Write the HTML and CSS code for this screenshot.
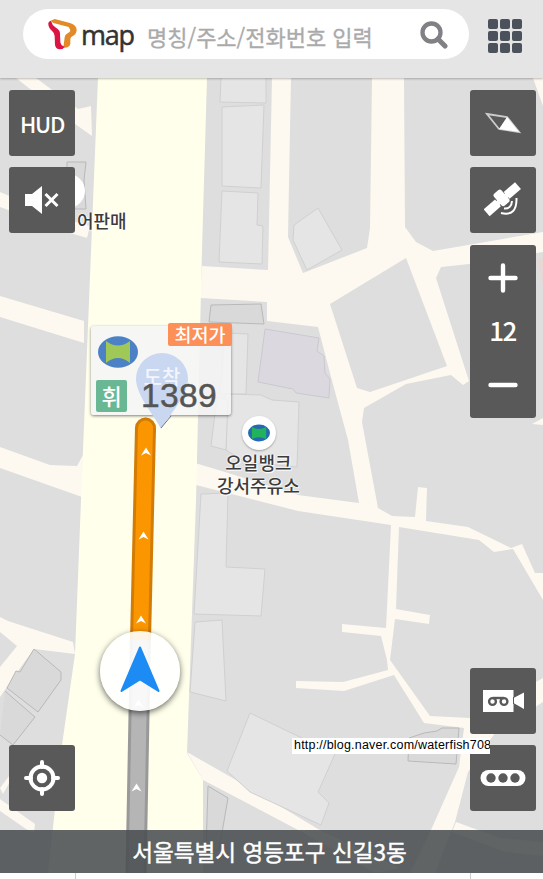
FILE: index.html
```
<!DOCTYPE html>
<html lang="ko">
<head>
    <meta charset="UTF-8">
    <meta name="viewport" content="width=device-width, initial-scale=1.0">
    <title>T map</title>
    <link rel="stylesheet" href="styles.css">
</head>
<body>
    <header class="header">
        <div class="search">
            <svg class="logo" width="30" height="36" viewBox="0 0 30 36">
                <g transform="translate(-4 -3) scale(0.3333)">
                    <path d="M20 20 L32 15 L78 27 Q98 33 98 49 Q97 62 85 67 Q79 70 79 76 V90 Q75 103 58 101 L62 70 Q62 62 71 58 Q80 54 79 48 L74 39 L28 27Z" fill="#e28a28"/>
                    <path d="M13 28 Q13 22 21 20 Q24 33 34 40 L42 46 Q48 50 48 58 L49 84 Q51 96 62 98 Q58 106 48 106 Q34 104 33 92 L32 66 Q32 58 25 52 Q12 40 13 28Z" fill="#dc1444"/>
                </g>
            </svg>
            <span class="logo-text">map</span>
            <span class="placeholder">명칭/주소/전화번호 입력</span>
            <svg class="search-icon" width="28" height="28" viewBox="0 0 28 28">
                <circle cx="11.500" cy="11.500" r="9" fill="none" stroke="#808085" stroke-width="4.300"/>
                <path d="M18 18 L25 25" stroke="#808085" stroke-width="5" stroke-linecap="round"/>
            </svg>
        </div>
        <div class="menu">
            <i></i><i></i><i></i>
            <i></i><i></i><i></i>
            <i></i><i></i><i></i>
        </div>
    </header>

    <main class="map">
        <svg class="map-canvas" width="543" height="795" viewBox="0 78 543 795">
            <rect y="78" width="543" height="795" fill="#dedede"/>

            <!-- small roads -->
            <g fill="#fdf8f0">
                <path d="M16 78 H36 L78 109 L91 106 L92 136 L75 124Z"/>
                <path d="M0 192 L12 197 L76 222 L90 226 L87 238 L70 233 L0 207Z"/>
                <path d="M0 296 L84 321 V343 L0 317Z"/>
                <path d="M0 447 L50 465 L77 466 L83 455 L82 497 L0 468Z"/>
                <path d="M0 617 L8 621 L73 642 L75 654 L34 649 L18 671 L0 697 V667 L17 646 L0 632Z"/>
                <path d="M0 788 L9 776 L11 780 L3 794Z"/>
                <path d="M0 799 L35 824 L34 833 L26 829 L0 811Z"/>
                <path d="M187 752 L250 788 L318 829 L400 868 L375 873 L300 831 L203 780Z"/>
                <path d="M456 822 L500 838 L543 842 V856 L505 852 L452 832Z"/>
                <path d="M533 78 H543 V106Z"/>
                <path d="M532 424 L543 418 V425Z"/>
                <path d="M202 266 L268 270 L272 78 H291 L288 237 L303 273 L367 248 L370 228 L372 78 H404 L405 227 L416 242 L433 251 L543 232 V252 L469 264 L441 267 L436 278 L469 381 L463 385 L451 375 L406 384 L364 408 L362 422 L378 508 L392 516 L415 517 L418 487 L427 488 L426 521 L468 527 L511 548 L522 544 L535 573 H543 V600 L513 549 L494 552 L479 540 L399 527 L396 609 L430 615 L429 624 L395 619 L390 660 L430 716 L470 718 L495 705 L543 678 V702 L495 733 L468 772 L455 822 L435 873 H410 L431 830 L459 767 L464 728 L424 723 L394 675 L344 691 L296 688 V681 L343 682 L388 670 L387 660 L381 636 L342 632 V624 L386 628 L391 525 L298 511 L196 485 L195 463 L225 472 L298 495 L359 503 L348 440 L331 377 L318 327 L267 321 V302 L200 298Z"/>
            </g>
            <path d="M330 304 L406 258 L447 366 L370 392 L357 388Z" fill="#dedede"/>

            <!-- main road -->
            <path d="M98 78 H207 L202 250 L196 500 L187 753 L203 780 V873 H48 L62 745 L75 654 L81 500Z" fill="#ffffec"/>

            <!-- buildings -->
            <g fill="#e5e5e5" stroke="#d0d0d0">
                <path d="M221 77 H266 V103 L220 102Z"/>
                <path d="M222 107 L264 105 L261 188 L222 186Z"/>
                <path d="M222 191 L258 193 L257 225 L263 226 L262 264 L219 262Z"/>
                <path d="M318 208 L342 250 L307 270 L293 240 L294 225Z"/>
                <path d="M225 333 L248 334 L246 394 H220Z"/>
                <path d="M225 394 L261 395 L272 400 L299 402 L297 467 L245 462 L226 450Z"/>
                <path d="M217 397 L228 400 L226 450 L211 446Z"/>
                <path d="M201 494 L228 493 L226 567 L265 569 L261 616 L194 614Z"/>
                <path d="M195 622 L222 620 L226 701 L190 692Z"/>
                <path d="M250 713 L335 754 L318 792 L329 803 L321 825 L250 792 L227 771Z"/>
            </g>
            <g fill="#d9d9d9" stroke="#b9b9b9">
                <path d="M67 162 H86 L84 180 L86 209 H66Z"/>
                <path d="M34 649 L61 672 V680 L38 712 L7 688 L16 671 L20 672Z"/>
                <path d="M5 691 L35 717 L13 745 L0 735"/>
                <path d="M211 305 L261 304 L264 324 L209 322Z"/>
                <path d="M208 786 L228 798 L219 850 L206 850Z"/>
                <path d="M424 733 L437 731 L442 728 H459 L456 764 L408 761 L409 738Z"/>
            </g>
            <path d="M265 329 L319 338 L317 351 L324 356 L325 373 L330 379 L329 398 L296 393 L293 389 L258 382Z" fill="#dbd9df" stroke="#cbc8d0"/>
            <path d="M537 260 L543 257 V287Z" fill="#e8d8d5"/>

            <!-- route -->
            <g fill="none">
                <path d="M140.500 636 L136 873" stroke="#999" stroke-width="21"/>
                <path d="M140.500 636 L136 873" stroke="#b5b5b5" stroke-width="15"/>
                <path d="M145.500 428 L140.500 640" stroke="#d27b05" stroke-width="21"/>
                <path d="M145.500 428 L145.400 430" stroke="#d27b05" stroke-width="21" stroke-linecap="round"/>
                <path d="M145.500 428 L145.400 430" stroke="#fb9600" stroke-width="15" stroke-linecap="round"/>
                <path d="M145.500 428 L140.500 640" stroke="#fb9600" stroke-width="15"/>
            </g>
            <g fill="#fff">
                <path id="chevron" d="M146 447.500 L151 455.500 L146 453 L141 455.500Z"/>
                <use href="#chevron" x="-2.500" y="84"/>
                <use href="#chevron" x="-5" y="168"/>
                <use href="#chevron" x="-7.500" y="252"/>
                <use href="#chevron" x="-9.500" y="336"/>
            </g>
        </svg>

        <span class="poi poi-shop"></span>
        <div class="poi-label label-shop">어판매</div>

        <div class="poi poi-oil">
            <svg width="22" height="18" viewBox="0 0 40 32">
                <ellipse cx="20" cy="16" rx="20" ry="15.500" fill="#2569b0"/>
                <path d="M7 5 Q20 12 33 5 V27 Q20 20 7 27Z" fill="#20b35a"/>
            </svg>
        </div>
        <div class="poi-label label-oil">오일뱅크<br>강서주유소</div>

        <div class="price-card">
            <svg class="pin" width="54" height="78" viewBox="0 0 54 78">
                <path d="M26 77 C22 67 1 44 1 27 A26 26 0 0 1 53 27 C53 44 31 67 26 77Z" fill="#cad7f1"/>
                <path d="M26 76 L36 64" stroke="#69748c" stroke-width="1"/>
                <text class="pin-text" x="27" y="33" text-anchor="middle">도착</text>
            </svg>
            <span class="best">최저가</span>
            <svg class="brand" width="40" height="32" viewBox="0 0 40 32">
                <ellipse cx="20" cy="16" rx="20" ry="15.700" fill="#4c82c5"/>
                <path d="M8 5 Q20 14 32 5 V27 Q20 17 8 27Z" fill="#a0c857"/>
            </svg>
            <div class="price-row">
                <span class="fuel">휘</span>
                <span class="price">1389</span>
            </div>
        </div>

        <div class="me">
            <svg width="40" height="46" viewBox="0 0 40 46">
                <path d="M20 1.500 L38.500 45 L20 33.500 L1.500 45Z" fill="#1c8cf4" stroke="#1c8cf4" stroke-width="2" stroke-linejoin="round"/>
            </svg>
        </div>

        <div class="controls">
            <div class="column">
                <div class="btn"><span class="hud">HUD</span></div>
                <div class="btn">
                    <svg width="36" height="30" viewBox="0 0 36 30">
                        <path d="M1 9 H8 L18 1 V29 L8 21 H1Z" fill="#fff"/>
                        <path d="M21.500 9 L33.500 21 M33.500 9 L21.500 21" stroke="#fff" stroke-width="3"/>
                    </svg>
                </div>
                <div class="btn bottom">
                    <svg width="38" height="38" viewBox="0 0 38 38">
                        <circle cx="19" cy="19" r="11.500" fill="none" stroke="#fff" stroke-width="4"/>
                        <circle cx="19" cy="19" r="5.200" fill="#fff"/>
                        <path d="M19 3 V8 M19 30 V35 M3 19 H8 M30 19 H35" stroke="#fff" stroke-width="4" stroke-linecap="round"/>
                    </svg>
                </div>
            </div>
            <div class="column">
                <div class="btn">
                    <svg width="36" height="24" viewBox="0 0 36 24">
                        <path d="M2 3 L22 6 L34 21 L14 18Z" fill="none" stroke="#ccc" stroke-width="1.800"/>
                        <path d="M22 6 L34 21 L14 18Z" fill="#fff"/>
                    </svg>
                </div>
                <div class="btn">
                    <svg width="38" height="36" viewBox="0 0 38 36">
                        <g transform="translate(18.500 17) rotate(-41)" fill="#fff">
                            <rect x="-21" y="-4.500" width="15" height="9"/>
                            <rect x="5.500" y="-4.500" width="15" height="9"/>
                            <rect x="-8" y="-2.500" width="16" height="5"/>
                            <rect x="-5" y="-9.500" width="10" height="16" rx="2.500"/>
                        </g>
                        <path d="M20 26.500 Q27.500 27 28 19 M17 31 Q33 35 32.500 16" fill="none" stroke="#fff" stroke-width="2"/>
                    </svg>
                </div>
                <div class="zoom">
                    <svg width="30" height="30" viewBox="0 0 30 30">
                        <path d="M15 2.500 V27.500 M2.500 15 H27.500" stroke="#fff" stroke-width="4.400" stroke-linecap="round"/>
                    </svg>
                    <span class="level">12</span>
                    <svg width="30" height="30" viewBox="0 0 30 30">
                        <path d="M2.500 15 H27.500" stroke="#fff" stroke-width="4.400" stroke-linecap="round"/>
                    </svg>
                </div>
                <div class="btn bottom">
                    <svg width="42" height="24" viewBox="0 0 42 24">
                        <path d="M1 1 H31.500 V9 L42 3.500 V20 L31.500 14 V23 H1Z" fill="#fff"/>
                        <path d="M31.500 8 V15" stroke="#595959"/>
                        <g fill="none" stroke="#595959" stroke-width="2.400">
                            <circle cx="10.500" cy="12.500" r="3.400"/>
                            <circle cx="22" cy="12.500" r="3.400"/>
                            <path d="M10.500 9 H22"/>
                        </g>
                    </svg>
                </div>
                <div class="btn">
                    <svg width="46" height="18" viewBox="0 0 46 18">
                        <rect x="0.500" y="1" width="45" height="16" rx="8" fill="#fff"/>
                        <g fill="#595959">
                            <circle cx="11" cy="9" r="4.700"/>
                            <circle cx="23" cy="9" r="4.700"/>
                            <circle cx="35" cy="9" r="4.700"/>
                        </g>
                    </svg>
                </div>
            </div>
        </div>

        <div class="blog-url">http://blog.naver.com/waterfish708</div>
        <div class="address">서울특별시 영등포구 신길3동</div>
    </main>

    <footer class="tabs">
        <span></span><span></span><span></span>
    </footer>
</body>
</html>
```
FILE: styles.css
```
* {
    box-sizing: border-box;
}
body {
    margin: 0;
    width: 543px;
    height: 879px;
    overflow: hidden;
    display: flex;
    flex-direction: column;
    font-family: "Noto Sans CJK KR", sans-serif;
    background-color: #fdfdfd;
}
svg {
    display: block;
    flex-shrink: 0;
}
.header {
    height: 78px;
    padding: 9px 21px 0 23px;
    display: flex;
    justify-content: space-between;
    align-items: flex-start;
    background-color: #e5e5e5;
    box-shadow: 0 1px 2px rgba(0, 0, 0, 0.25);
    position: relative;
    z-index: 2;
}
.search {
    width: 446px;
    height: 50px;
    padding: 0 21px 0 25px;
    border-radius: 25px;
    background-color: white;
    display: flex;
    align-items: center;
}
.logo {
    margin-top: 1px;
}
.logo-text {
    width: 57px;
    margin-left: 3px;
    margin-top: 2px;
    font-family: "Open Sans", sans-serif;
    font-size: 27px;
    line-height: 38px;
    letter-spacing: -1.2px;
    color: #333;
    -webkit-text-stroke: 0.5px #333;
}
.placeholder {
    margin-left: 9px;
    margin-top: 3px;
    font-size: 22px;
    line-height: 34px;
    color: #aaa;
    -webkit-text-stroke: 0.3px #aaa;
    white-space: nowrap;
}
.search-icon {
    margin-left: auto;
    margin-top: 1px;
}
.menu {
    margin-top: 10px;
    display: grid;
    grid-template-columns: repeat(3, 10px);
    grid-auto-rows: 10px;
    gap: 2px;
}
.menu i {
    border-radius: 2px;
    background-color: #4c525b;
}
.map {
    height: 795px;
    position: relative;
    display: flex;
    flex-direction: column;
    overflow: hidden;
}
.map-canvas {
    position: absolute;
    top: 0;
    left: 0;
}

/* map markers */
.poi {
    position: absolute;
    width: 34px;
    height: 34px;
    border-radius: 50%;
    background-color: white;
    display: flex;
    align-items: center;
    justify-content: center;
    box-shadow: 0 1px 2px rgba(0, 0, 0, 0.3);
}
.poi-shop {
    left: 51px;
    top: 96px;
    box-shadow: none;
}
.poi-oil {
    left: 242px;
    top: 338px;
}
.poi-label {
    position: absolute;
    font-size: 18px;
    font-weight: 500;
    line-height: 23px;
    text-align: center;
    white-space: nowrap;
    color: #3c3c3c;
    text-shadow: 0 0 2px white, 0 0 2px white, 1px 1px 1px white;
}
.label-shop {
    left: 77px;
    top: 131px;
}
.label-oil {
    left: 217px;
    top: 373px;
}
.price-card {
    position: absolute;
    left: 91px;
    top: 248px;
    width: 140px;
    height: 89px;
    border-radius: 3px;
    background-color: rgba(244, 244, 244, 0.86);
    box-shadow: 0 1px 3px rgba(0, 0, 0, 0.5);
}
.pin {
    position: absolute;
    left: 44px;
    top: 26px;
}
.pin-text {
    font-size: 20px;
    font-weight: 500;
    fill: #f2f5fb;
}
.best {
    position: absolute;
    right: -1px;
    top: -3px;
    width: 64px;
    height: 23px;
    border-radius: 2px;
    background-color: #fc9058;
    color: white;
    font-size: 18.5px;
    font-weight: 500;
    line-height: 23px;
    text-align: center;
}
.brand {
    margin: 10px 0 0 7px;
}
.price-row {
    position: relative;
    display: flex;
    align-items: center;
    margin: 12px 0 0 5px;
}
.fuel {
    width: 31px;
    height: 32px;
    background-color: #6ab794;
    border-radius: 2px;
    color: white;
    font-size: 22px;
    font-weight: 500;
    line-height: 31px;
    text-align: center;
}
.price {
    margin-left: 14px;
    font-family: "Liberation Sans", sans-serif;
    font-size: 33.5px;
    line-height: 32px;
    letter-spacing: 0.4px;
    color: #555;
    -webkit-text-stroke: 0.5px #555;
}
.me {
    position: absolute;
    left: 100px;
    top: 553px;
    width: 80px;
    height: 80px;
    border-radius: 50%;
    background-color: rgba(255, 255, 255, 0.9);
    box-shadow: 0 2px 6px rgba(0, 0, 0, 0.6);
    display: flex;
    align-items: center;
    justify-content: center;
}
.me svg {
    margin-top: -4px;
}

/* buttons */
.controls {
    flex: 1;
    position: relative;
    display: flex;
    justify-content: space-between;
    padding: 12px 7.5px 19px 9px;
}
.column {
    display: flex;
    flex-direction: column;
    gap: 11px;
}
.btn, .zoom {
    width: 66px;
    height: 66px;
    border-radius: 3px;
    background-color: #595959;
    color: white;
    display: flex;
    align-items: center;
    justify-content: center;
    font-size: 21px;
    font-weight: 500;
}
.btn.bottom {
    margin-top: auto;
}
.hud {
    font-size: 22px;
    line-height: 34px;
    letter-spacing: -1.3px;
}
.zoom {
    height: 173px;
    margin-top: 1px;
    flex-direction: column;
    justify-content: space-between;
    padding: 18px 0;
}
.level {
    font-size: 26px;
    line-height: 30px;
    letter-spacing: -1.5px;
    margin-top: -3px;
}
.blog-url {
    position: absolute;
    left: 292px;
    top: 660px;
    width: 198px;
    height: 16px;
    padding-left: 2px;
    overflow: hidden;
    background-color: white;
    color: black;
    font-family: "Liberation Sans", sans-serif;
    font-size: 12.5px;
    line-height: 15px;
    letter-spacing: 0.2px;
    white-space: nowrap;
}
.address {
    position: relative;
    height: 43px;
    background-color: rgba(74, 78, 81, 0.88);
    color: white;
    font-size: 22.6px;
    line-height: 43px;
    text-align: center;
    padding-right: 4px;
    -webkit-text-stroke: 0.4px white;
}
.tabs {
    height: 6px;
    display: grid;
    grid-template-columns: 76px 395px 1fr;
    background-color: #fdfdfd;
}
.tabs span {
    border-right: 1px solid #ccc;
}
.tabs span:last-child {
    border: none;
}
```
